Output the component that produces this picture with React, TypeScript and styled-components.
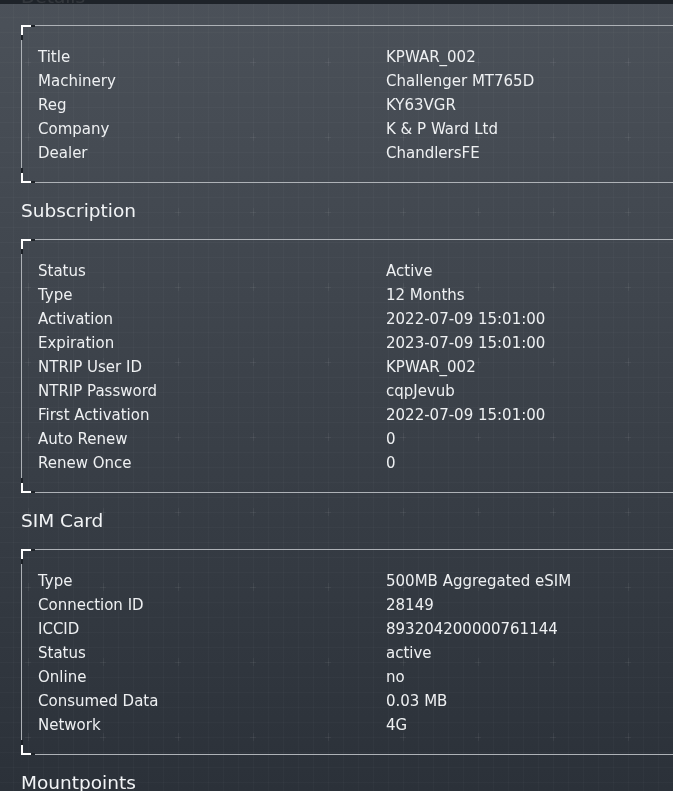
import React from "react";
import styled, { createGlobalStyle } from "styled-components";

const GlobalStyle = createGlobalStyle`
  html, body {
    margin: 0;
    padding: 0;
  }
  body {
    background: linear-gradient(180deg, #4b5159 0px, #3b4149 400px, #2b3139 791px);
    background-color: #2b3139;
    min-height: 791px;
    overflow: hidden;
    font-family: "DejaVu Sans", "Liberation Sans", sans-serif;
    color: #eef0f2;
  }
`;

const GridLayer = styled.svg`
  position: fixed;
  inset: 0;
  width: 100%;
  height: 100%;
  pointer-events: none;
  z-index: 0;
`;

const TopBar = styled.div`
  position: fixed;
  top: 0;
  left: 0;
  right: 0;
  height: 4px;
  background: rgba(24, 28, 34, 0.88);
  z-index: 5;
`;

const Page = styled.main`
  position: relative;
  z-index: 1;
  margin-top: -31px;
  padding-left: 21px;
`;

const Heading = styled.h2`
  margin: 14px 0 14px;
  height: 28px;
  line-height: 28px;
  font-size: 18.5px;
  font-weight: normal;
  color: #f2f4f6;
`;

const Box = styled.section`
  position: relative;
  margin-right: -60px;
  border-top: 1px solid #aeb2b7;
  border-left: 1px solid #aeb2b7;
  border-bottom: 1px solid #aeb2b7;
  padding: 19px 16px 17px 16px;
`;

const Corner = styled.span<{ $edge: "top" | "bottom" }>`
  position: absolute;
  left: -1px;
  ${(p) => (p.$edge === "top" ? "top: -1px;" : "bottom: -1px;")}
  width: 10px;
  height: 10px;
  box-sizing: border-box;
  border-left: 2px solid #ffffff;
  ${(p) =>
    p.$edge === "top"
      ? "border-top: 2px solid #ffffff;"
      : "border-bottom: 2px solid #ffffff;"}

  &::before {
    content: "";
    position: absolute;
    left: 8px;
    ${(p) => (p.$edge === "top" ? "top: -2px;" : "bottom: -2px;")}
    width: 4px;
    height: 2px;
    background: #1d2228;
  }

  &::after {
    content: "";
    position: absolute;
    left: -2px;
    ${(p) => (p.$edge === "top" ? "top: 8px;" : "bottom: 8px;")}
    width: 2px;
    height: 5px;
    background: #1d2228;
  }
`;

const Rows = styled.dl`
  margin: 0;
  display: grid;
  grid-template-columns: 348px 1fr;
  grid-auto-rows: 24px;
  font-size: 15px;
  line-height: 24px;
`;

const Label = styled.dt`
  margin: 0;
  color: #eef0f2;
  white-space: nowrap;
`;

const Value = styled.dd`
  margin: 0;
  color: #eef0f2;
  white-space: nowrap;
`;

type Row = [string, string];

const details: Row[] = [
  ["Title", "KPWAR_002"],
  ["Machinery", "Challenger MT765D"],
  ["Reg", "KY63VGR"],
  ["Company", "K & P Ward Ltd"],
  ["Dealer", "ChandlersFE"],
];

const subscription: Row[] = [
  ["Status", "Active"],
  ["Type", "12 Months"],
  ["Activation", "2022-07-09 15:01:00"],
  ["Expiration", "2023-07-09 15:01:00"],
  ["NTRIP User ID", "KPWAR_002"],
  ["NTRIP Password", "cqpJevub"],
  ["First Activation", "2022-07-09 15:01:00"],
  ["Auto Renew", "0"],
  ["Renew Once", "0"],
];

const sim: Row[] = [
  ["Type", "500MB Aggregated eSIM"],
  ["Connection ID", "28149"],
  ["ICCID", "893204200000761144"],
  ["Status", "active"],
  ["Online", "no"],
  ["Consumed Data", "0.03 MB"],
  ["Network", "4G"],
];

const InfoBox: React.FC<{ rows: Row[] }> = ({ rows }) => (
  <Box>
    <Corner $edge="top" />
    <Corner $edge="bottom" />
    <Rows>
      {rows.map(([k, v]) => (
        <React.Fragment key={k}>
          <Label>{k}</Label>
          <Value>{v}</Value>
        </React.Fragment>
      ))}
    </Rows>
  </Box>
);

const Grid: React.FC = () => (
  <GridLayer aria-hidden="true">
    <defs>
      <pattern id="fine" x="13" y="2" width="15" height="15" patternUnits="userSpaceOnUse">
        <path d="M0 0.5H15M0.5 0V15" stroke="rgba(255,255,255,0.025)" strokeWidth="1" fill="none" />
      </pattern>
      <pattern id="cross" x="28" y="62" width="75" height="75" patternUnits="userSpaceOnUse">
        <path d="M0 0.5H3M72 0.5H75M0.5 0V4M0.5 71V75" stroke="rgba(255,255,255,0.045)" strokeWidth="1" fill="none" />
      </pattern>
    </defs>
    <rect width="100%" height="100%" fill="url(#fine)" />
    <rect width="100%" height="100%" fill="url(#cross)" />
  </GridLayer>
);

export default function App() {
  return (
    <>
      <GlobalStyle />
      <Grid />
      <TopBar />
      <Page>
        <Heading>Details</Heading>
        <InfoBox rows={details} />
        <Heading>Subscription</Heading>
        <InfoBox rows={subscription} />
        <Heading>SIM Card</Heading>
        <InfoBox rows={sim} />
        <Heading>Mountpoints</Heading>
      </Page>
    </>
  );
}
